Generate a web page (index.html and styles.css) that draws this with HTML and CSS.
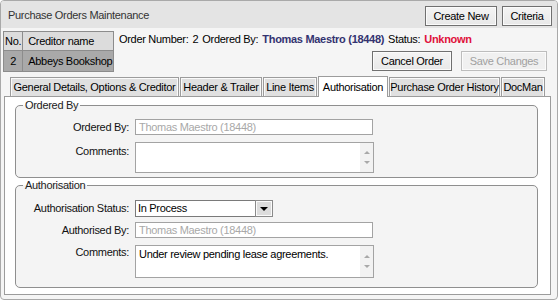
FILE: index.html
```html
<!DOCTYPE html>
<html>
<head>
<meta charset="utf-8">
<title>Purchase Orders Maintenance</title>
<link rel="stylesheet" href="styles.css">
</head>
<body>
<div class="window">
  <div class="titlebar">
    <span class="title">Purchase Orders Maintenance</span>
    <div class="btns">
      <button class="btn btn-create">Create New</button>
      <button class="btn btn-criteria">Criteria</button>
    </div>
  </div>
  <div class="top">
    <table class="cred">
      <tr class="hd"><td class="c-no">No.</td><td class="c-name">Creditor name</td></tr>
      <tr class="sel"><td class="c-no num">2</td><td class="c-name">Abbeys Bookshop</td></tr>
    </table>
    <div class="info">
      <div class="line">
        <span class="k">Order Number:</span><span class="v">2</span><span class="k">Ordered By:</span><span class="who">Thomas Maestro (18448)</span><span class="k">Status:</span><span class="status">Unknown</span>
      </div>
      <div class="actions">
        <button class="btn btn-cancel">Cancel Order</button>
        <button class="btn btn-save disabled">Save Changes</button>
      </div>
    </div>
  </div>
  <div class="tabs">
    <div class="tab t1">General Details, Options &amp; Creditor</div>
    <div class="tab t2">Header &amp; Trailer</div>
    <div class="tab t3">Line Items</div>
    <div class="tab t4 active">Authorisation</div>
    <div class="tab t5">Purchase Order History</div>
    <div class="tab t6">DocMan</div>
  </div>
  <div class="panel">
    <fieldset class="group g1">
      <legend>Ordered By</legend>
      <div class="form">
        <div class="lbl">Ordered By:</div>
        <div class="field input dis">Thomas Maestro (18448)</div>
        <div class="lbl lbl-top">Comments:</div>
        <div class="field ta ta1"><div class="ta-text"></div><div class="sb"><span class="arr up"></span><span class="arr dn"></span></div></div>
      </div>
    </fieldset>
    <fieldset class="group g2">
      <legend>Authorisation</legend>
      <div class="form form2">
        <div class="lbl">Authorisation Status:</div>
        <div class="select"><span class="sel-text">In Process</span><span class="sel-btn"><span class="sel-arrow"></span></span></div>
        <div class="lbl">Authorised By:</div>
        <div class="field input dis">Thomas Maestro (18448)</div>
        <div class="lbl lbl-top">Comments:</div>
        <div class="field ta ta2"><div class="ta-text">Under review pending lease agreements.</div><div class="sb"><span class="arr up"></span><span class="arr dn"></span></div></div>
      </div>
    </fieldset>
  </div>
</div>
</body>
</html>
```

FILE: styles.css
```css
html, body {
  margin: 0;
  padding: 0;
  background: #ffffff;
}
body {
  font-family: "Liberation Sans", Arial, sans-serif;
  font-size: 11px;
  line-height: 13px;
  letter-spacing: -0.3px;
  color: #000;
}
.window {
  box-sizing: border-box;
  width: 558px;
  height: 300px;
  border: 1px solid #a9a9a9;
  border-radius: 4px;
  background: #f5f5f5;
  display: flex;
  flex-direction: column;
  overflow: hidden;
}
.titlebar {
  height: 27px;
  flex: none;
  background: #e4e4e4;
  display: flex;
  justify-content: space-between;
  align-items: flex-start;
  padding: 0 5px 0 7px;
}
.title {
  color: #333;
  margin-top: 8px;
}
.btns {
  display: flex;
  gap: 5px;
  margin-top: 5px;
}
.btn {
  box-sizing: border-box;
  height: 20px;
  font-family: "Liberation Sans", Arial, sans-serif;
  font-size: 11px;
  letter-spacing: -0.3px;
  color: #000;
  background: linear-gradient(#f4f4f4, #e8e8e8);
  border: 1px solid #707070;
  box-shadow: inset 0 0 0 1px #fbfbfb;
  border-radius: 0;
  padding: 0;
  margin: 0;
}
.btn-create { width: 72px; }
.btn-criteria { width: 50px; }
.btn-cancel { width: 80px; }
.btn-save { width: 86px; }
.btn.disabled {
  color: #a0a0a0;
  border-color: #bdbdbd;
  background: #f0f0f0;
}
.top {
  display: flex;
  margin: 3px 0 0 2px;
  flex: none;
}
.cred {
  border-collapse: collapse;
  border: 1px solid #8c8c8c;
  font-size: 11px;
  width: 111px;
}
.cred td {
  border: 1px solid #8c8c8c;
  padding: 0 1px;
  white-space: nowrap;
}
.cred .hd td {
  background: #dcdcdc;
  height: 18px;
}
.cred .sel td {
  background: #a9a9a9;
  height: 20px;
}
.c-no { width: 15px; }
.num { text-align: center; }
.cred td.c-name { padding-left: 5px; padding-right: 0; }
.info {
  flex: 1;
  display: flex;
  flex-direction: column;
  padding-top: 2px;
}
.line {
  margin-left: 5px;
  white-space: nowrap;
}
.line span { margin-right: 4px; }
.who { color: #333370; font-weight: bold; }
.status { color: #e0103a; font-weight: bold; }
.actions {
  display: flex;
  justify-content: flex-end;
  gap: 9px;
  margin-top: 5px;
  padding-right: 10px;
}
.tabs {
  display: flex;
  align-items: flex-end;
  gap: 1px;
  height: 20px;
  margin: 4px 0 0 9px;
  flex: none;
}
.tab {
  box-sizing: border-box;
  height: 19px;
  padding: 3px 0 0;
  text-align: center;
  background: #e0e0e0;
  border: 1px solid #9c9c9c;
  border-bottom: none;
  box-shadow: inset 1px 1px 0 #fafafa, inset -1px 0 0 #fafafa;
  white-space: nowrap;
}
.t1 { width: 169px; }
.t2 { width: 82px; }
.t3 { width: 54px; }
.t4 { width: 70px; }
.t5 { width: 111px; }
.t6 { width: 44px; }
.tab.active {
  height: 21px;
  margin-bottom: -1px;
  background: #ffffff;
  box-shadow: none;
  padding-top: 4px;
  position: relative;
  z-index: 1;
}
.panel {
  box-sizing: border-box;
  height: 199px;
  margin: 0 6px 0 3px;
  border: 1px solid #9c9c9c;
  background: #ffffff;
  padding: 2px 12px 0 10px;
  flex: none;
}
.group {
  margin: 0;
  padding: 0;
  border: 1px solid #8f8f8f;
  border-radius: 5px;
  background: #f4f4f4;
  min-width: 0;
}
.group legend {
  padding: 0 2px;
  margin-left: 7px;
  line-height: 13px;
  color: #222;
}
.g2 { margin-top: 1px; }
.form {
  display: grid;
  grid-template-columns: 113px 238px;
  column-gap: 6px;
  row-gap: 7px;
  padding: 7px 0 4px;
}
.form2 {
  padding: 8px 0 9px;
  row-gap: 5px;
}
.form2 .ta { margin-top: 2px; }
.lbl {
  text-align: right;
  align-self: center;
  color: #111;
  white-space: nowrap;
}
.lbl-top {
  align-self: start;
  padding-top: 3px;
}
.field {
  box-sizing: border-box;
  background: #fff;
  border: 1px solid #a3a3a3;
}
.input {
  height: 16px;
  padding: 0 3px;
  line-height: 14px;
}
.dis { color: #a8a8a8; }
.ta {
  display: flex;
  width: 239px;
  height: 31px;
}
.ta2 { height: 33px; }
.ta-text {
  flex: 1;
  padding: 2px 3px;
}
.sb {
  width: 13px;
  background: #f2f2f2;
  display: flex;
  flex-direction: column;
  align-items: center;
  justify-content: center;
  gap: 7px;
}
.arr {
  width: 0;
  height: 0;
  border-left: 3px solid transparent;
  border-right: 3px solid transparent;
}
.arr.up { border-bottom: 3px solid #a8a8a8; }
.arr.dn { border-top: 3px solid #a8a8a8; }
.select {
  box-sizing: border-box;
  width: 138px;
  height: 17px;
  border: 1px solid #7a7a7a;
  background: #fff;
  display: flex;
  align-items: stretch;
}
.sel-text {
  flex: 1;
  padding: 1px 2px 0;
}
.sel-btn {
  box-sizing: border-box;
  width: 16px;
  background: #dcdcdc;
  border: 1px solid #fafafa;
  outline: 1px solid #8a8a8a;
  display: flex;
  align-items: center;
  justify-content: center;
}
.sel-arrow {
  width: 0;
  height: 0;
  border-left: 4px solid transparent;
  border-right: 4px solid transparent;
  border-top: 4px solid #000;
}
```
